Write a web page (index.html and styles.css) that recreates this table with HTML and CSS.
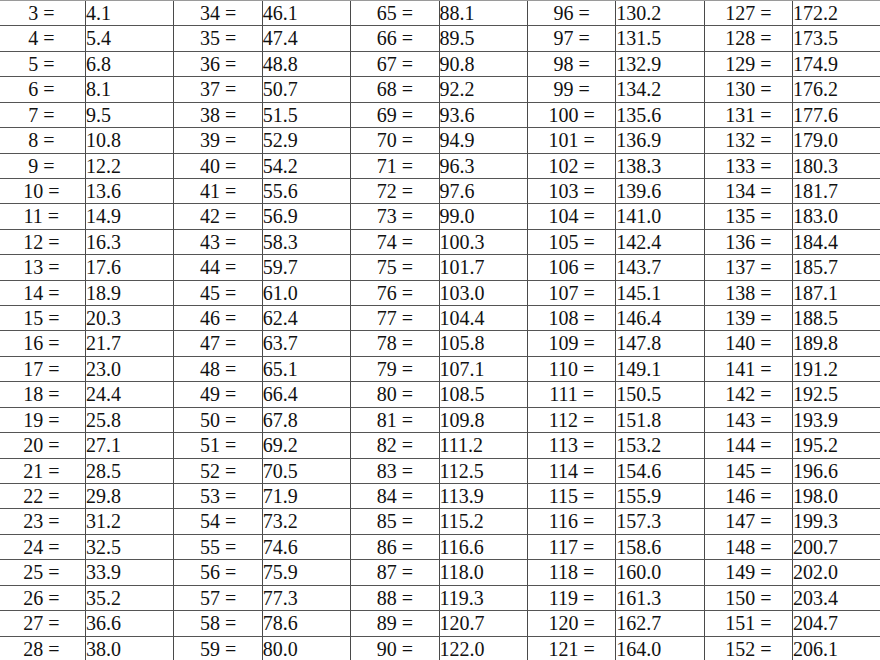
FILE: index.html
```html
<!DOCTYPE html>
<html lang="en">
<head>
<meta charset="utf-8">
<title>Conversion table</title>
<link rel="stylesheet" href="styles.css">
</head>
<body>
<div class="table">
<div class="k">3 =</div><div class="v">4.1</div><div class="k">34 =</div><div class="v">46.1</div><div class="k">65 =</div><div class="v">88.1</div><div class="k">96 =</div><div class="v">130.2</div><div class="k">127 =</div><div class="v">172.2</div>
<div class="k">4 =</div><div class="v">5.4</div><div class="k">35 =</div><div class="v">47.4</div><div class="k">66 =</div><div class="v">89.5</div><div class="k">97 =</div><div class="v">131.5</div><div class="k">128 =</div><div class="v">173.5</div>
<div class="k">5 =</div><div class="v">6.8</div><div class="k">36 =</div><div class="v">48.8</div><div class="k">67 =</div><div class="v">90.8</div><div class="k">98 =</div><div class="v">132.9</div><div class="k">129 =</div><div class="v">174.9</div>
<div class="k">6 =</div><div class="v">8.1</div><div class="k">37 =</div><div class="v">50.7</div><div class="k">68 =</div><div class="v">92.2</div><div class="k">99 =</div><div class="v">134.2</div><div class="k">130 =</div><div class="v">176.2</div>
<div class="k">7 =</div><div class="v">9.5</div><div class="k">38 =</div><div class="v">51.5</div><div class="k">69 =</div><div class="v">93.6</div><div class="k">100 =</div><div class="v">135.6</div><div class="k">131 =</div><div class="v">177.6</div>
<div class="k">8 =</div><div class="v">10.8</div><div class="k">39 =</div><div class="v">52.9</div><div class="k">70 =</div><div class="v">94.9</div><div class="k">101 =</div><div class="v">136.9</div><div class="k">132 =</div><div class="v">179.0</div>
<div class="k">9 =</div><div class="v">12.2</div><div class="k">40 =</div><div class="v">54.2</div><div class="k">71 =</div><div class="v">96.3</div><div class="k">102 =</div><div class="v">138.3</div><div class="k">133 =</div><div class="v">180.3</div>
<div class="k">10 =</div><div class="v">13.6</div><div class="k">41 =</div><div class="v">55.6</div><div class="k">72 =</div><div class="v">97.6</div><div class="k">103 =</div><div class="v">139.6</div><div class="k">134 =</div><div class="v">181.7</div>
<div class="k">11 =</div><div class="v">14.9</div><div class="k">42 =</div><div class="v">56.9</div><div class="k">73 =</div><div class="v">99.0</div><div class="k">104 =</div><div class="v">141.0</div><div class="k">135 =</div><div class="v">183.0</div>
<div class="k">12 =</div><div class="v">16.3</div><div class="k">43 =</div><div class="v">58.3</div><div class="k">74 =</div><div class="v">100.3</div><div class="k">105 =</div><div class="v">142.4</div><div class="k">136 =</div><div class="v">184.4</div>
<div class="k">13 =</div><div class="v">17.6</div><div class="k">44 =</div><div class="v">59.7</div><div class="k">75 =</div><div class="v">101.7</div><div class="k">106 =</div><div class="v">143.7</div><div class="k">137 =</div><div class="v">185.7</div>
<div class="k">14 =</div><div class="v">18.9</div><div class="k">45 =</div><div class="v">61.0</div><div class="k">76 =</div><div class="v">103.0</div><div class="k">107 =</div><div class="v">145.1</div><div class="k">138 =</div><div class="v">187.1</div>
<div class="k">15 =</div><div class="v">20.3</div><div class="k">46 =</div><div class="v">62.4</div><div class="k">77 =</div><div class="v">104.4</div><div class="k">108 =</div><div class="v">146.4</div><div class="k">139 =</div><div class="v">188.5</div>
<div class="k">16 =</div><div class="v">21.7</div><div class="k">47 =</div><div class="v">63.7</div><div class="k">78 =</div><div class="v">105.8</div><div class="k">109 =</div><div class="v">147.8</div><div class="k">140 =</div><div class="v">189.8</div>
<div class="k">17 =</div><div class="v">23.0</div><div class="k">48 =</div><div class="v">65.1</div><div class="k">79 =</div><div class="v">107.1</div><div class="k">110 =</div><div class="v">149.1</div><div class="k">141 =</div><div class="v">191.2</div>
<div class="k">18 =</div><div class="v">24.4</div><div class="k">49 =</div><div class="v">66.4</div><div class="k">80 =</div><div class="v">108.5</div><div class="k">111 =</div><div class="v">150.5</div><div class="k">142 =</div><div class="v">192.5</div>
<div class="k">19 =</div><div class="v">25.8</div><div class="k">50 =</div><div class="v">67.8</div><div class="k">81 =</div><div class="v">109.8</div><div class="k">112 =</div><div class="v">151.8</div><div class="k">143 =</div><div class="v">193.9</div>
<div class="k">20 =</div><div class="v">27.1</div><div class="k">51 =</div><div class="v">69.2</div><div class="k">82 =</div><div class="v">111.2</div><div class="k">113 =</div><div class="v">153.2</div><div class="k">144 =</div><div class="v">195.2</div>
<div class="k">21 =</div><div class="v">28.5</div><div class="k">52 =</div><div class="v">70.5</div><div class="k">83 =</div><div class="v">112.5</div><div class="k">114 =</div><div class="v">154.6</div><div class="k">145 =</div><div class="v">196.6</div>
<div class="k">22 =</div><div class="v">29.8</div><div class="k">53 =</div><div class="v">71.9</div><div class="k">84 =</div><div class="v">113.9</div><div class="k">115 =</div><div class="v">155.9</div><div class="k">146 =</div><div class="v">198.0</div>
<div class="k">23 =</div><div class="v">31.2</div><div class="k">54 =</div><div class="v">73.2</div><div class="k">85 =</div><div class="v">115.2</div><div class="k">116 =</div><div class="v">157.3</div><div class="k">147 =</div><div class="v">199.3</div>
<div class="k">24 =</div><div class="v">32.5</div><div class="k">55 =</div><div class="v">74.6</div><div class="k">86 =</div><div class="v">116.6</div><div class="k">117 =</div><div class="v">158.6</div><div class="k">148 =</div><div class="v">200.7</div>
<div class="k">25 =</div><div class="v">33.9</div><div class="k">56 =</div><div class="v">75.9</div><div class="k">87 =</div><div class="v">118.0</div><div class="k">118 =</div><div class="v">160.0</div><div class="k">149 =</div><div class="v">202.0</div>
<div class="k">26 =</div><div class="v">35.2</div><div class="k">57 =</div><div class="v">77.3</div><div class="k">88 =</div><div class="v">119.3</div><div class="k">119 =</div><div class="v">161.3</div><div class="k">150 =</div><div class="v">203.4</div>
<div class="k">27 =</div><div class="v">36.6</div><div class="k">58 =</div><div class="v">78.6</div><div class="k">89 =</div><div class="v">120.7</div><div class="k">120 =</div><div class="v">162.7</div><div class="k">151 =</div><div class="v">204.7</div>
<div class="k">28 =</div><div class="v">38.0</div><div class="k">59 =</div><div class="v">80.0</div><div class="k">90 =</div><div class="v">122.0</div><div class="k">121 =</div><div class="v">164.0</div><div class="k">152 =</div><div class="v">206.1</div>
</div>
</body>
</html>
```

FILE: styles.css
```css
html, body {
  margin: 0;
  padding: 0;
  background: #ffffff;
  overflow: hidden;
}

.table {
  display: grid;
  grid-template-columns: repeat(10, 88.375px);
  grid-auto-rows: 25.43px;
  margin-left: -2.375px;
  border-top: 1px solid #9a9a9a;
  font-family: "Times New Roman", "Liberation Serif", Tinos, serif;
  font-size: 20px;
  color: #111111;
}

.k, .v {
  box-sizing: border-box;
  border-right: 1px solid #4a4a4a;
  border-bottom: 1px solid #555555;
  line-height: 24.43px;
  white-space: nowrap;
}

.k {
  text-align: center;
}

.v {
  text-align: left;
  padding-left: 0;
}
```
